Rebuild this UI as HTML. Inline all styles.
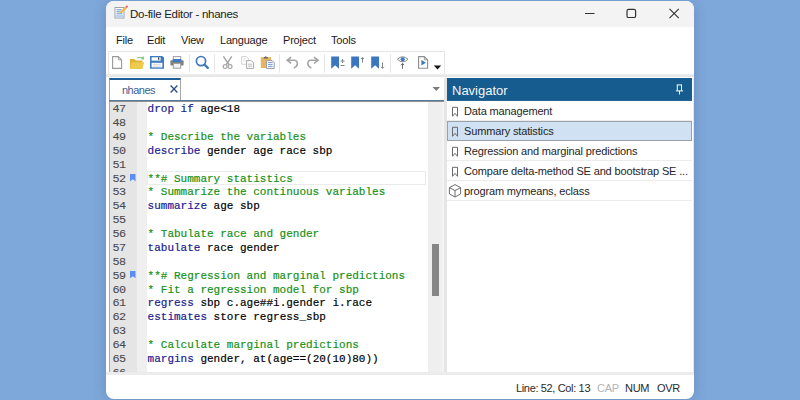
<!DOCTYPE html>
<html><head><meta charset="utf-8">
<style>
html,body{margin:0;padding:0;width:800px;height:400px;overflow:hidden;background:#7ea8da;}
*{box-sizing:border-box;}
.a{position:absolute;}
#win{position:absolute;left:106px;top:1px;width:588px;height:398px;border-radius:8px;background:#fff;overflow:hidden;box-shadow:0 2px 14px rgba(30,50,90,0.22);}
.ui{font-family:"Liberation Sans",sans-serif;color:#1a1a1a;white-space:pre;}
.mono{font-family:"Liberation Mono",monospace;font-size:11px;white-space:pre;-webkit-text-stroke:0.18px currentColor;}
.kw{color:#1a1890;}
.cm{color:#159015;}
</style></head><body>
<div id="win">
  <!-- title bar -->
  <div class="a" style="left:0;top:0;width:588px;height:26px;background:#f3f3f3;"></div>
  <div class="a ui" style="left:24px;top:4.5px;font-size:11.5px;line-height:16px;color:#1c1c1c;letter-spacing:-0.28px;">Do-file Editor - nhanes</div>
  <!-- menu -->
  <div class="a ui" style="left:10px;top:31.6px;font-size:11px;line-height:14px;letter-spacing:-0.2px;">File</div>
  <div class="a ui" style="left:41px;top:31.6px;font-size:11px;line-height:14px;letter-spacing:-0.2px;">Edit</div>
  <div class="a ui" style="left:75px;top:31.6px;font-size:11px;line-height:14px;letter-spacing:-0.2px;">View</div>
  <div class="a ui" style="left:114px;top:31.6px;font-size:11px;line-height:14px;letter-spacing:-0.2px;">Language</div>
  <div class="a ui" style="left:177px;top:31.6px;font-size:11px;line-height:14px;letter-spacing:-0.2px;">Project</div>
  <div class="a ui" style="left:225px;top:31.6px;font-size:11px;line-height:14px;letter-spacing:-0.2px;">Tools</div>
  <!-- toolbar -->
  <div class="a" style="left:2px;top:50px;width:337px;height:24px;border-top:1px solid #e6e6e6;border-left:1px solid #e6e6e6;border-right:1px solid #e6e6e6;"></div>
  <div class="a" style="left:0;top:73px;width:588px;height:3px;background:linear-gradient(#eeeeee,#e3e3e3);"></div>
  <!-- editor -->
  <div class="a" style="left:3px;top:77px;width:335px;height:295px;background:#fff;"></div>
  <!-- tab -->
  <div class="a" style="left:3px;top:77px;width:72px;height:22px;background:#fff;border-left:1px solid #a6a6a6;border-right:1px solid #a6a6a6;border-top:2px solid #1f5e96;"></div>
  <div class="a ui" style="left:16px;top:81.5px;font-size:11px;line-height:14px;color:#3a5f96;letter-spacing:-0.5px;">nhanes</div>
  <svg class="a" style="left:63px;top:83px" width="10" height="10" viewBox="0 0 10 10"><path d="M1.6 1.6L8.4 8.4M8.4 1.6L1.6 8.4" stroke="#2a4f8a" stroke-width="1.35" fill="none"/></svg>
  <svg class="a" style="left:326px;top:85px" width="9" height="6" viewBox="0 0 9 6"><path d="M0.5 1L8 1L4.25 5Z" fill="#7a7a7a"/></svg>
  <div class="a" style="left:3px;top:99px;width:335px;height:1px;background:#587c97;"></div><div class="a" style="left:3px;top:100px;width:335px;height:1px;background:#8a9096;"></div>
  <!-- gutter -->
  <div class="a" style="left:3px;top:101px;width:1px;height:270px;background:#a9a9a9;"></div>
  <div class="a" style="left:4px;top:101px;width:27px;height:270px;background:#e5e5e5;"></div>
  <div class="a" style="left:31px;top:101px;width:10px;height:270px;background:#efefef;"></div>
  <!-- current line -->
  <div class="a" style="left:41px;top:170px;width:279px;height:14px;border:1px solid #ebebeb;"></div>
  <div class="a" style="left:3px;top:101px;width:319px;height:270px;overflow:hidden;">
    <div class="a mono" style="left:3.5px;top:1.14px;line-height:13.87px;color:#4a4a4a;font-size:11.8px;letter-spacing:-0.5px;-webkit-text-stroke:0.1px currentColor;">47
48
49
50
51
52
53
54
55
56
57
58
59
60
61
62
63
64
65
66</div>
    <div class="a mono" style="left:38.6px;top:1.14px;line-height:13.87px;color:#000;"><span class="kw">drop</span> <span class="kw">if</span> age&lt;18

<span class="cm">* Describe the variables</span>
<span class="kw">describe</span> gender age race sbp

<span class="cm">**# Summary statistics</span>
<span class="cm">* Summarize the continuous variables</span>
<span class="kw">summarize</span> age sbp

<span class="cm">* Tabulate race and gender</span>
<span class="kw">tabulate</span> race gender

<span class="cm">**# Regression and marginal predictions</span>
<span class="cm">* Fit a regression model for sbp</span>
<span class="kw">regress</span> sbp c.age##i.gender i.race
<span class="kw">estimates</span> store regress_sbp

<span class="cm">* Calculate marginal predictions</span>
<span class="kw">margins</span> gender, at(age==(20(10)80))
</div>
  </div>
  <!-- bookmarks in gutter -->
  <svg class="a" style="left:23.6px;top:173px" width="6" height="8" viewBox="0 0 6 8"><path d="M0 0H5.5V7.2L2.75 5.2L0 7.2Z" fill="#5b8ef4"/></svg>
  <svg class="a" style="left:23.6px;top:270px" width="6" height="8" viewBox="0 0 6 8"><path d="M0 0H5.5V7.2L2.75 5.2L0 7.2Z" fill="#5b8ef4"/></svg>
  <!-- scrollbar -->
  <div class="a" style="left:322px;top:101px;width:14px;height:270px;background:#efefef;"></div><div class="a" style="left:336px;top:101px;width:2px;height:270px;background:#f4f4f4;"></div>
  <div class="a" style="left:326px;top:243px;width:7px;height:52px;background:#868686;"></div>
  <!-- splitter -->
  <div class="a" style="left:338px;top:77px;width:3px;height:296px;background:#e5e5e5;"></div>
  <!-- navigator -->
  <div class="a" style="left:341px;top:77px;width:245px;height:22px;background:#165c8e;"></div>
  <div class="a ui" style="left:346px;top:81.5px;font-size:13px;line-height:16px;color:#f4f7fa;">Navigator</div>
  <div class="a" style="left:586.5px;top:77px;width:1.5px;height:295px;background:#e8e8e8;"></div>
  <!-- navigator items -->
  <div class="a" style="left:341px;top:99px;width:245px;height:1px;background:#2a6494;"></div>
  <div class="a" style="left:341px;top:119px;width:245px;height:1px;background:#ececec;"></div>
  <div class="a" style="left:341px;top:120px;width:245px;height:20px;background:#cfe1f2;border:1px solid #9aa1a8;"></div>
  <div class="a" style="left:341px;top:159px;width:245px;height:1px;background:#ececec;"></div>
  <div class="a" style="left:341px;top:179px;width:245px;height:1px;background:#ececec;"></div>
  <div class="a" style="left:341px;top:199px;width:245px;height:1px;background:#ececec;"></div>
  <div class="a ui" style="left:358px;top:104px;font-size:11px;line-height:12px;letter-spacing:-0.15px;color:#252525;">Data management</div>
  <div class="a ui" style="left:358px;top:124px;font-size:11px;line-height:12px;letter-spacing:-0.15px;color:#252525;">Summary statistics</div>
  <div class="a ui" style="left:358px;top:144px;font-size:11px;line-height:12px;letter-spacing:-0.15px;color:#252525;">Regression and marginal predictions</div>
  <div class="a ui" style="left:358px;top:164px;font-size:11px;line-height:12px;letter-spacing:-0.15px;color:#252525;">Compare delta-method SE and bootstrap SE ...</div>
  <div class="a ui" style="left:358px;top:184px;font-size:11px;line-height:12px;letter-spacing:-0.15px;color:#252525;">program mymeans, eclass</div>
  <!-- status bar -->
  <div class="a" style="left:0;top:371px;width:588px;height:3px;background:#ececec;"></div>
  <div class="a ui" style="left:410px;top:381px;font-size:11px;line-height:12px;letter-spacing:-0.35px;color:#2a2a2a;">Line: 52, Col: 13</div>
  <div class="a ui" style="left:491px;top:381px;font-size:11px;line-height:12px;color:#b4b4b4;letter-spacing:-0.3px;">CAP</div>
  <div class="a ui" style="left:519px;top:381px;font-size:11px;line-height:12px;letter-spacing:-0.3px;color:#2a2a2a;">NUM</div>
  <div class="a ui" style="left:551px;top:381px;font-size:11px;line-height:12px;letter-spacing:-0.3px;color:#2a2a2a;">OVR</div>
</div>
<svg class="a" style="left:0;top:0" width="800" height="400" viewBox="0 0 800 400">
 <!-- title icon -->
 <rect x="115" y="7.5" width="9" height="10.5" fill="#fff" stroke="#a2a2a2" stroke-width="1"/>
 <path d="M116.5 9.8H121.5M116.5 11.8H120.5M116.5 13.8H122.5" stroke="#5b8fd0" stroke-width="1"/>
 <rect x="116" y="15" width="7.5" height="2.5" fill="#b9d1ec"/>
 <path d="M120.5 12.8L126.3 7.2" stroke="#f2b440" stroke-width="2.2"/>
 <circle cx="126.8" cy="6.7" r="1.1" fill="#ef5f73"/>
 <!-- window controls -->
 <path d="M585 13.5H594.5" stroke="#333" stroke-width="1"/>
 <rect x="627" y="9.3" width="8.6" height="8.2" rx="1.6" fill="none" stroke="#333" stroke-width="1.2"/>
 <path d="M669.5 8.8L678.8 18.1M678.8 8.8L669.5 18.1" stroke="#333" stroke-width="1.1"/>
 <!-- toolbar: new -->
 <path d="M112.6 56.6H118.4L121.6 59.8V68.4H112.6Z" fill="#fff" stroke="#999" stroke-width="1.1" stroke-linejoin="round"/>
 <path d="M118.4 56.6V59.8H121.6" fill="none" stroke="#999" stroke-width="0.9"/>
 <!-- open -->
 <path d="M130 59H134.2L135.8 60.6H142.4V68.8H130Z" fill="#e0b232"/>
 <path d="M130 68.8L131.4 62.2H144.2L142.4 68.8Z" fill="#edcb4c"/>
 <path d="M137.2 58.2Q139.8 56.4 142.6 57.9" fill="none" stroke="#84c97a" stroke-width="1.1"/>
 <path d="M143.6 56L143.9 59.8L140.8 59Z" fill="#74c268"/>
 <!-- save -->
 <path d="M150 55.9H162.3L164 57.6V68.8H150Z" fill="#3d7bc3"/>
 <rect x="151.6" y="57.3" width="9" height="3.3" fill="#fff"/>
 <rect x="158" y="57.3" width="1.3" height="2.5" fill="#4a4a4a"/>
 <rect x="151.6" y="62.8" width="10.8" height="4.6" fill="#fff"/>
 <path d="M153 64.4H161M153 66.2H161" stroke="#d0d0d0" stroke-width="0.8"/>
 <!-- print -->
 <rect x="173.3" y="56.6" width="7.4" height="3.4" fill="#fff" stroke="#9c9c9c" stroke-width="1"/>
 <rect x="170.4" y="60.2" width="13.2" height="5.4" rx="1" fill="#7e7e7e"/>
 <rect x="172.8" y="59" width="8.4" height="3" fill="#3d7bc3"/>
 <rect x="173.3" y="63.4" width="7.4" height="4.8" fill="#f3f3f3" stroke="#9c9c9c" stroke-width="1"/>
 <!-- separators -->
 <path d="M189.5 54.5V72.5M214.5 54.5V72.5M279.5 54.5V72.5M324.5 54.5V72.5M390.5 54.5V72.5" stroke="#e4e4e4" stroke-width="1"/>
 <!-- search -->
 <circle cx="201" cy="61.1" r="4.6" fill="none" stroke="#3d77ba" stroke-width="1.7"/>
 <path d="M204.6 64.7L207.8 67.9" stroke="#3d77ba" stroke-width="2.3" stroke-linecap="round"/>
 <!-- scissors -->
 <path d="M223.4 56.4L229.2 65M231.8 56.4L226 65" stroke="#a5a5a5" stroke-width="1.4"/>
 <circle cx="225.1" cy="66.6" r="1.9" fill="none" stroke="#a5a5a5" stroke-width="1.2"/>
 <circle cx="230.1" cy="66.6" r="1.9" fill="none" stroke="#a5a5a5" stroke-width="1.2"/>
 <!-- copy -->
 <path d="M241.6 56.6H246.4L248.4 58.6V64.2H241.6Z" fill="#fff" stroke="#d2d2d2" stroke-width="1"/>
 <path d="M243 59H246M243 61H246" stroke="#dcdcdc" stroke-width="0.8"/>
 <path d="M246.6 60.6H251.4L253.6 62.8V68.4H246.6Z" fill="#fff" stroke="#a9a9a9" stroke-width="1"/>
 <path d="M248 64.2H252.2M248 66.2H252.2" stroke="#b4b4b4" stroke-width="0.9"/>
 <!-- paste -->
 <rect x="260.8" y="57.2" width="10.2" height="10.8" fill="#e8b45e"/>
 <path d="M263.6 58.4H268L267.6 57H266.6L265.8 55.8L265 57H264Z" fill="#666"/>
 <path d="M266.6 60.6H272.2L274.2 62.6V68.6H266.6Z" fill="#fff" stroke="#9a9a9a" stroke-width="1"/>
 <path d="M268 62.6H272.6M268 64.6H272.6M268 66.6H272.6" stroke="#5b8fd0" stroke-width="0.9"/>
 <!-- undo/redo -->
 <path d="M287 60.3H294.2C298.4 60.3 298.6 66.2 293.8 68" fill="none" stroke="#a5a5a5" stroke-width="1.6"/>
 <path d="M291.2 57.2L287.2 60.3L291.2 63.4" fill="none" stroke="#a5a5a5" stroke-width="1.6"/>
 <path d="M318.2 60.3H311C306.8 60.3 306.6 66.2 311.4 68" fill="none" stroke="#a5a5a5" stroke-width="1.6"/>
 <path d="M314 57.2L318 60.3L314 63.4" fill="none" stroke="#a5a5a5" stroke-width="1.6"/>
 <!-- bookmarks -->
 <path d="M331.2 56.4H339V68.8L335.1 65.2L331.2 68.8Z" fill="#3b77be"/>
 <path d="M351.2 56.4H359V68.8L355.1 65.2L351.2 68.8Z" fill="#3b77be"/>
 <path d="M371.2 56.4H379V68.8L375.1 65.2L371.2 68.8Z" fill="#3b77be"/>
 <path d="M340.6 61H344.6M342.6 59V63M340.6 65.5H344.6" stroke="#858585" stroke-width="1"/>
 <path d="M362.5 57.6V62.6M361.1 59L362.5 57.4L363.9 59" fill="none" stroke="#858585" stroke-width="1"/>
 <path d="M382.5 62.6V68.2M381.1 66.8L382.5 68.4L383.9 66.8" fill="none" stroke="#858585" stroke-width="1"/>
 <!-- eye -->
 <path d="M397.4 59.3Q402.7 54.2 408 59.3Q402.7 64.4 397.4 59.3Z" fill="#fff" stroke="#8a8a8a" stroke-width="1"/>
 <circle cx="402.7" cy="59.3" r="2.1" fill="#3d79c0"/>
 <path d="M402.5 63.6V68.8M400.9 65.2L402.5 63.4L404.1 65.2" fill="none" stroke="#5c5c5c" stroke-width="0.9"/>
 <!-- run -->
 <path d="M418.6 56.6H424.4L427.6 59.8V68.2H418.6Z" fill="#fff" stroke="#8e8e8e" stroke-width="1.1" stroke-linejoin="round"/>
 <path d="M424.4 56.6V59.8H427.6" fill="none" stroke="#8e8e8e" stroke-width="0.9"/>
 <path d="M421.4 60L425.9 62.8L421.4 65.6Z" fill="#3d7bc3"/>
 <path d="M433.8 65.5H441.2L437.5 69.5Z" fill="#151515"/>
 <!-- nav icons -->
 <path d="M452.5 107.3H457.5V116.3L455 113.3L452.5 116.3Z" fill="none" stroke="#6a6a6a" stroke-width="1" stroke-linejoin="miter"/>
 <path d="M452.5 127.3H457.5V136.3L455 133.3L452.5 136.3Z" fill="none" stroke="#6a6a6a" stroke-width="1" stroke-linejoin="miter"/>
 <path d="M452.5 147.3H457.5V156.3L455 153.3L452.5 156.3Z" fill="none" stroke="#6a6a6a" stroke-width="1" stroke-linejoin="miter"/>
 <path d="M452.5 167.3H457.5V176.3L455 173.3L452.5 176.3Z" fill="none" stroke="#6a6a6a" stroke-width="1" stroke-linejoin="miter"/>
 <path d="M455 184.6L460.6 187.6V194L455 197L449.4 194V187.6Z M449.4 187.6L455 190.6L460.6 187.6M455 190.6V197" fill="none" stroke="#6e6e6e" stroke-width="1" stroke-linejoin="round"/>
 <!-- navigator pin -->
 <path d="M677.3 85V90.6M681.5 85V90.6M676.8 84.9H682M675.9 90.9H683.1M679.5 91V94.5" fill="none" stroke="#fff" stroke-width="1"/>
</svg>
</body></html>
